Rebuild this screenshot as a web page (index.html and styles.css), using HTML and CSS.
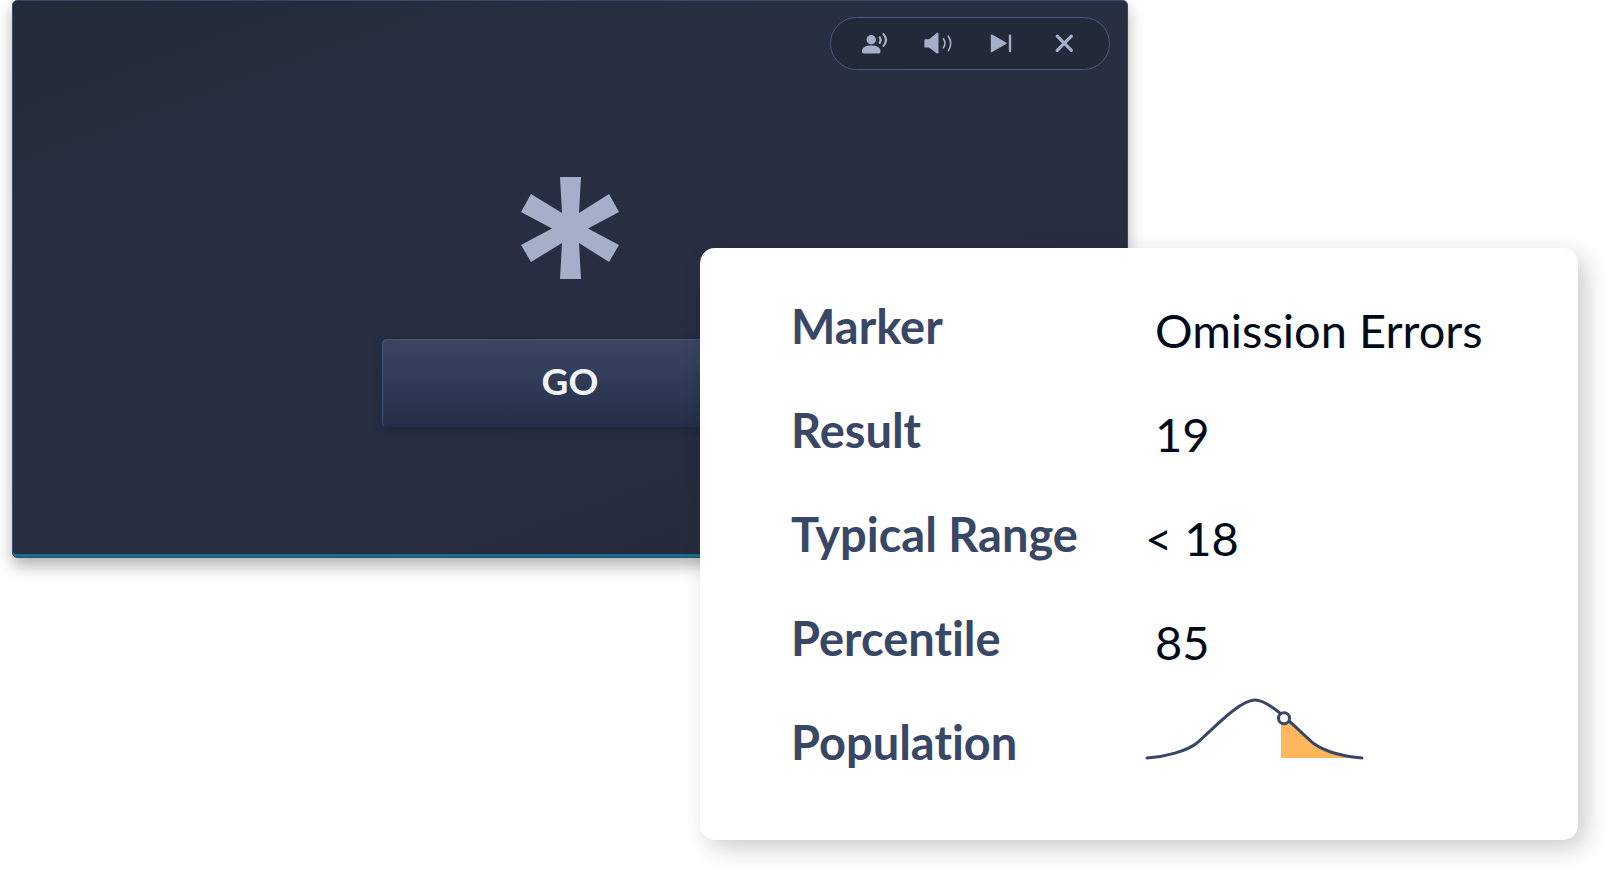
FILE: index.html
```html
<!DOCTYPE html>
<html lang="en">
<head>
    <meta charset="UTF-8">
    <meta name="viewport" content="width=device-width, initial-scale=1.0">
    <title>Omission Errors</title>
    <link rel="stylesheet" href="styles.css">
</head>
<body>
    <main class="stage">
        <!-- Test screen -->
        <section class="screen">
            <div class="toolbar">
                <button type="button" aria-label="Voice">
                    <svg viewBox="0 0 28 24" width="28" height="24">
                        <circle cx="10.2" cy="8.8" r="4.7" fill="currentColor"/>
                        <path fill="currentColor" d="M1 20.3c0-3.800 3.600-5.700 9.200-5.700s9.300 1.900 9.300 5.700c0 1.500-.6 2.200-1.900 2.200H2.900C1.600 22.500 1 21.800 1 20.300z"/>
                        <path class="wave" d="M18.700 6.300Q20.600 9 18.700 11.900M22.500 3.100Q27.500 9 22.500 14.900"/>
                    </svg>
                </button>
                <button type="button" aria-label="Volume">
                    <svg viewBox="0 0 28 24" width="28" height="24">
                        <path fill="currentColor" d="M1.700 8.200H5L12.500 2.200c1-.8 2-.4 2 .8v18.400c0 1.200-1 1.600-2 .8L5 16.600H1.700C.8 16.600.4 16.200.4 15.400v-6c0-.8.4-1.200 1.300-1.200z"/>
                        <path class="wave thin" d="M19.400 7.800Q22.600 12.300 19.400 16.900M24.400 5.200Q29 12.300 24.400 19.600"/>
                    </svg>
                </button>
                <button type="button" aria-label="Skip">
                    <svg viewBox="0 0 28 24" width="28" height="24">
                        <path fill="currentColor" d="M3.800 4.200c0-.8.6-1 1.300-.6l14 8c.7.400.7 1 0 1.400l-14 8c-.7.400-1.300.2-1.300-.6z"/>
                        <rect x="21.800" y="3.500" width="2.400" height="17.700" rx="1" fill="currentColor"/>
                    </svg>
                </button>
                <button type="button" aria-label="Close">
                    <svg viewBox="0 0 28 24" width="28" height="24">
                        <path class="cross" d="M7.200 5.200L21.400 19.400M21.400 5.200L7.200 19.400"/>
                    </svg>
                </button>
            </div>

            <svg class="stimulus" viewBox="0 0 100 102" width="100" height="102" role="img" aria-label="Asterisk">
                <path fill="currentColor" d="M40 0H61L59 36L89 17L99 35L68 51.500L99 68L89 85L59 66L61 102H40L42 66L11 85L1 68L32 51.500L1 35L11 17L42 36z"/>
            </svg>

            <button type="button" class="go">GO</button>
        </section>

        <!-- Result card -->
        <section class="card">
            <table>
                <tr>
                    <th scope="row">Marker</th>
                    <td class="indent">Omission Errors</td>
                </tr>
                <tr>
                    <th scope="row">Result</th>
                    <td class="indent">19</td>
                </tr>
                <tr>
                    <th scope="row">Typical Range</th>
                    <td>&lt; 18</td>
                </tr>
                <tr>
                    <th scope="row">Percentile</th>
                    <td class="indent">85</td>
                </tr>
                <tr>
                    <th scope="row">Population</th>
                    <td class="chart">
                        <svg viewBox="0 0 220 64" width="220" height="64" role="img" aria-label="Population curve">
                            <path fill="#ffb65c" d="M136 19V61H217C200 60 180 55 168 46C150 30 145 24 136 19z"/>
                            <path class="curve" d="M2 61C20 60 42 54 52 46C70 30 95 3 110 3C125 3 150 30 168 46C180 55 200 60 217 61"/>
                            <circle class="point" cx="139" cy="21.300" r="5.500"/>
                        </svg>
                    </td>
                </tr>
            </table>
        </section>
    </main>
</body>
</html>
```
FILE: styles.css
```css
* {
    box-sizing: border-box;
}

body {
    margin: 0;
    background-color: #fff;
    font-family: Lato, sans-serif;
    font-variant-ligatures: none;
}

/* The card overlaps the lower right corner of the screen */
.stage {
    display: grid;
    grid-template-columns: 688fr 428fr 450fr;
    grid-template-rows: 248px 310px auto;
    padding: 0 39px 40px 12px;
}

.screen {
    grid-column: 1 / 3;
    grid-row: 1 / 3;
    display: flex;
    flex-direction: column;
    align-items: center;
    border: 1px solid #3a4869;
    border-radius: 5px;
    background: linear-gradient(160deg, #232a38 0%, #282f42 35%, #272d40 70%, #222939 100%);
    box-shadow: inset 0 -3px 0 #127090, 0 8px 16px rgba(0, 0, 0, 0.3);
}

.toolbar {
    display: flex;
    align-self: flex-end;
    width: 280px;
    height: 53px;
    margin: 16px 17px 0 0;
    padding: 0 14px 0 12px;
    border: 1px solid #4a5b84;
    border-radius: 27px;
    background-color: #222938;
}

.toolbar button {
    display: flex;
    flex: 1;
    align-items: center;
    justify-content: center;
    padding: 0 0 1px;
    border: 0;
    background: none;
    color: #a6afca;
    cursor: pointer;
}

.wave {
    fill: none;
    stroke: currentColor;
    stroke-width: 2.2;
    stroke-linecap: round;
}

.thin {
    stroke-width: 1.6;
}

.cross {
    stroke: currentColor;
    stroke-width: 3.2;
    stroke-linecap: round;
}

.stimulus {
    margin-top: 107px;
    color: #a6afca;
}

.go {
    width: 376px;
    height: 88px;
    margin-top: 60px;
    padding: 0 0 6px;
    border: 0;
    border-radius: 5px;
    background: linear-gradient(#3b4562, #2f3b56 50%, #242e49);
    box-shadow: inset 1px 1px 0 #43547a, 0 4px 8px rgba(25, 35, 45, 0.5);
    color: #f3f4f9;
    font-family: inherit;
    font-size: 37px;
    font-weight: 700;
    cursor: pointer;
}

.card {
    grid-column: 2 / 4;
    grid-row: 2 / 4;
    z-index: 1;
    padding: 31px 48px 41px 91px;
    border-radius: 15px;
    background-color: #fff;
    box-shadow: 8px 8px 24px rgba(0, 0, 0, 0.2);
}

table {
    width: 100%;
    border-collapse: collapse;
}

th,
td {
    height: 104px;
    padding: 19px 0 0;
    font-size: 47px;
    line-height: 56px;
    text-align: left;
    vertical-align: top;
    white-space: nowrap;
}

th {
    width: 354px;
    color: #384766;
    font-weight: 700;
}

td {
    padding-top: 23px;
    color: #030b1a;
}

.indent {
    padding-left: 10px;
}

.chart {
    padding-top: 2px;
}

.chart svg {
    display: block;
}

.curve {
    fill: none;
    stroke: #384766;
    stroke-width: 3;
    stroke-linecap: round;
}

.point {
    fill: #fff;
    stroke: #384766;
    stroke-width: 3;
}
```
